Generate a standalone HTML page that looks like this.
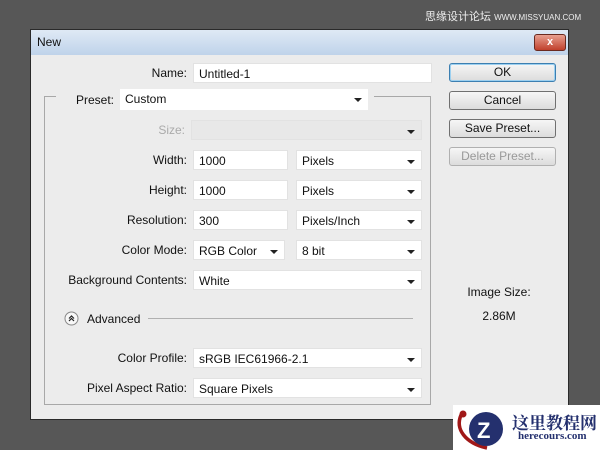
<!DOCTYPE html><html><head><style>
body{margin:0;width:600px;height:450px;background:#575757;position:relative;overflow:hidden;font-family:"Liberation Sans",sans-serif;font-size:12px;color:#111}
.a{position:absolute}
.dlg{left:30px;top:29px;width:539px;height:391px;background:#ececec;border:1px solid #2a2a2a;box-sizing:border-box}
.tb{left:31px;top:30px;width:537px;height:25px;background:linear-gradient(#dfe9f5,#bfd3ea)}
.in{position:absolute;background:#fff;border:1px solid #e2e2e2;box-sizing:border-box;height:20px;padding:3px 5px;font-size:12px}
.dd:after{content:"";position:absolute;right:6px;top:9px;border:3px solid transparent;border-top:4px solid #222;border-bottom:0;border-left-width:4px;border-right-width:4px}
.lb{position:absolute;text-align:right;font-size:12px}
.bt{position:absolute;left:449px;width:107px;height:19px;border:1px solid #707070;border-radius:3px;background:linear-gradient(#f6f6f6,#dcdcdc);box-sizing:border-box;text-align:center;line-height:17px;font-size:12px}
</style></head><body>
<div class="a" style="left:425px;top:8px;color:#eee;font-size:11px;font-family:'Liberation Sans','Noto Sans CJK SC',sans-serif">思缘设计论坛 <span style="font-size:8px">WWW.MISSYUAN.COM</span></div>
<div class="a dlg"></div>
<div class="a tb"></div>
<div class="a" style="left:37px;top:35px;font-size:12px">New</div>
<div class="a" style="left:534px;top:34px;width:30px;height:15px;border-radius:3px;background:linear-gradient(#e8a090,#c0402c);border:1px solid #6a2a20;color:#fff;text-align:center;font-size:11px;line-height:15px;font-weight:bold">x</div>
<div class="a" style="left:44px;top:96px;width:387px;height:309px;border:1px solid #a8a8a8;box-sizing:border-box"></div>
<div class="a" style="left:56px;top:92px;width:318px;height:10px;background:#ececec"></div>
<div class="lb" style="left:100px;width:87px;top:66px">Name:</div>
<div class="in" style="left:193px;top:63px;width:239px">Untitled-1</div>
<div class="lb" style="left:60px;width:54px;top:93px">Preset:</div>
<div class="in dd" style="left:120px;top:89px;width:248px;height:21px;border:0">Custom</div>
<div class="lb" style="left:100px;width:85px;top:123px;color:#aaa">Size:</div>
<div class="in dd" style="left:191px;top:120px;width:231px;background:#e8e8e8"></div>
<div class="lb" style="left:100px;width:87px;top:153px">Width:</div>
<div class="in" style="left:193px;top:150px;width:95px">1000</div>
<div class="in dd" style="left:296px;top:150px;width:126px">Pixels</div>
<div class="lb" style="left:100px;width:87px;top:183px">Height:</div>
<div class="in" style="left:193px;top:180px;width:95px">1000</div>
<div class="in dd" style="left:296px;top:180px;width:126px">Pixels</div>
<div class="lb" style="left:100px;width:87px;top:213px">Resolution:</div>
<div class="in" style="left:193px;top:210px;width:95px">300</div>
<div class="in dd" style="left:296px;top:210px;width:126px">Pixels/Inch</div>
<div class="lb" style="left:100px;width:87px;top:243px">Color Mode:</div>
<div class="in dd" style="left:193px;top:240px;width:92px">RGB Color</div>
<div class="in dd" style="left:296px;top:240px;width:126px">8 bit</div>
<div class="lb" style="left:50px;width:137px;top:273px">Background Contents:</div>
<div class="in dd" style="left:193px;top:270px;width:229px">White</div>
<svg class="a" style="left:64px;top:311px" width="15" height="15"><circle cx="7.5" cy="7.5" r="6.5" fill="#f8f8f8" stroke="#888"/><path d="M5 7.5 L7.5 5 L10 7.5 M5 10 L7.5 7.5 L10 10" stroke="#222" fill="none" stroke-width="1.2"/></svg>
<div class="a" style="left:87px;top:312px">Advanced</div>
<div class="a" style="left:148px;top:318px;width:265px;border-top:1px solid #b0b0b0"></div>
<div class="lb" style="left:100px;width:87px;top:351px">Color Profile:</div>
<div class="in dd" style="left:193px;top:348px;width:229px">sRGB IEC61966-2.1</div>
<div class="lb" style="left:50px;width:137px;top:381px">Pixel Aspect Ratio:</div>
<div class="in dd" style="left:193px;top:378px;width:229px">Square Pixels</div>
<div class="bt" style="top:63px;border-color:#3c7fb1;box-shadow:inset 0 0 0 1px #9cd0f0">OK</div>
<div class="bt" style="top:91px">Cancel</div>
<div class="bt" style="top:119px">Save Preset...</div>
<div class="bt" style="top:147px;color:#999;border-color:#b0b0b0">Delete Preset...</div>
<div class="a" style="left:449px;top:285px;width:100px;text-align:center">Image Size:</div>
<div class="a" style="left:449px;top:309px;width:100px;text-align:center">2.86M</div>
<div class="a" style="left:453px;top:405px;width:147px;height:45px;background:#fff"></div>
<svg class="a" style="left:453px;top:405px" width="60" height="45"><path d="M8 10 C2 24 12 38 34 43" stroke="#a01818" stroke-width="3.5" fill="none"/><circle cx="10" cy="9" r="3.5" fill="#a01818"/><circle cx="33" cy="24" r="17" fill="#24306e"/><text x="24" y="33" font-size="22" font-weight="bold" fill="#fff" font-family="Liberation Sans">Z</text></svg>
<div class="a" style="left:512px;top:409px;color:#24306e;font-weight:bold;font-size:17px;font-family:'Liberation Serif','Noto Serif CJK SC',serif">这里教程网</div>
<div class="a" style="left:518px;top:430px;color:#24306e;font-weight:bold;font-size:11px;font-family:'Liberation Serif',serif">herecours.com</div>
</body></html>
